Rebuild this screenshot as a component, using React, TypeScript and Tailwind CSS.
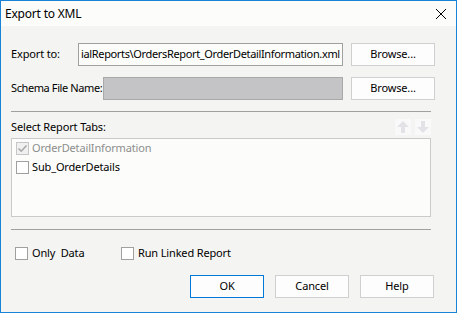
import React from "react";

const font = { fontFamily: '"Noto Sans", "Open Sans", sans-serif' };

function Btn({ label, focused = false, w = "w-[74px]" }: { label: string; focused?: boolean; w?: string }) {
  return (
    <div
      className={`${w} h-[23px] flex items-center justify-center text-black bg-[#fdfdfd] border ${
        focused ? "border-[#0078d7]" : "border-[#d0d0d0]"
      }`}
    >
      {label}
    </div>
  );
}

function Check({ checked = false, disabled = false }: { checked?: boolean; disabled?: boolean }) {
  return (
    <div
      className={`w-[13px] h-[13px] border flex items-center justify-center shrink-0 ${
        disabled ? "border-[#c6c6c6] bg-[#f0f0f0]" : "border-[#a0a0a0] bg-white"
      }`}
    >
      {checked && (
        <svg width="11" height="11" viewBox="0 0 11 11">
          <path d="M1.5 5.5 L4.2 8.2 L9.5 2.5" fill="none" stroke="#a8a8a8" strokeWidth="1.6" />
        </svg>
      )}
    </div>
  );
}

function Arrow({ down = false }: { down?: boolean }) {
  return (
    <div className="w-[16px] h-[16px] bg-[#f9f9f9]">
      <svg width="16" height="16" viewBox="0 0 16 16" style={down ? { transform: "rotate(180deg)" } : undefined}>
        <path d="M8 2 L14 8 L10 8 L10 14 L6 14 L6 8 L2 8 Z" fill="#e3e2e7" />
      </svg>
    </div>
  );
}

export default function App() {
  return (
    <div
      className="w-[457px] h-[313px] border border-[#1883d7] bg-[#f4f4f2] flex flex-col text-[11px] tracking-[-0.15px] text-black overflow-hidden"
      style={font}
    >
      <div className="h-[25px] bg-[#fcfdfb] flex items-center justify-between pl-[4px] pr-[9px] shrink-0">
        <span className="text-[12px] tracking-[-0.2px] text-black leading-none mt-[1px]">Export to XML</span>
        <svg width="12" height="12" viewBox="0 0 12 12">
          <path d="M1 1 L11 11 M11 1 L1 11" stroke="#000" strokeWidth="1" />
        </svg>
      </div>

      <div className="flex flex-col pl-[10px]">
        <div className="flex items-center mt-[17px] h-[23px]">
          <div className="w-[67px] whitespace-nowrap">Export to:</div>
          <div className="w-[265px] h-[23px] border border-[#a0a0a0] bg-[#fcfdfb] overflow-hidden flex items-center pl-[2px] whitespace-nowrap tracking-[-0.35px]">
            ialReports\OrdersReport_OrderDetailInformation.xml
          </div>
          <div className="ml-[8px]">
            <Btn label="Browse..." w="w-[84px]" />
          </div>
        </div>

        <div className="flex items-center mt-[11px] h-[23px]">
          <div className="w-[92px] whitespace-nowrap tracking-[-0.4px]">Schema File Name:</div>
          <div className="w-[240px] h-[23px] border border-[#a9a9a9] bg-[#c4c3c5]" />
          <div className="ml-[8px]">
            <Btn label="Browse..." w="w-[84px]" />
          </div>
        </div>

        <div className="w-[420px] h-px bg-[#a0a0a0] mt-[11px]" />

        <div className="w-[420px] flex items-center justify-between mt-[7px] h-[16px]">
          <span>Select Report Tabs:</span>
          <div className="flex gap-[4px]">
            <Arrow />
            <Arrow down />
          </div>
        </div>

        <div className="w-[420px] h-[79px] mt-[3px] border border-[#cacaca] bg-[#fcfdfb] flex flex-col pl-[4px] pt-[3px] gap-[6px]">
          <div className="flex items-center gap-[3px] h-[13px]">
            <Check checked disabled />
            <span className="text-[#8d8d8d]">OrderDetailInformation</span>
          </div>
          <div className="flex items-center gap-[3px] h-[13px]">
            <Check />
            <span>Sub_OrderDetails</span>
          </div>
        </div>

        <div className="w-[420px] h-px bg-[#a0a0a0] mt-[12px]" />

        <div className="flex items-center mt-[17px] h-[13px]">
          <div className="flex items-center gap-[4px] w-[110px] pl-[4px]">
            <Check />
            <span className="whitespace-pre">Only  Data</span>
          </div>
          <div className="flex items-center gap-[4px]">
            <Check />
            <span>Run Linked Report</span>
          </div>
        </div>

        <div className="flex mt-[15px] pl-[179px] gap-[11px]">
          <Btn label="OK" focused />
          <Btn label="Cancel" />
          <Btn label="Help" />
        </div>
      </div>
    </div>
  );
}
